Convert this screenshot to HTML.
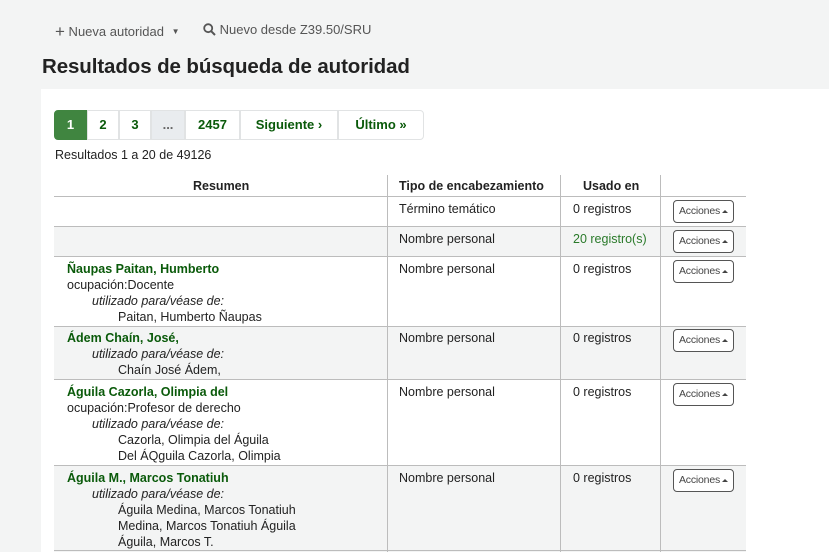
<!DOCTYPE html>
<html><head><meta charset="utf-8"><style>
*{margin:0;padding:0;box-sizing:border-box}
html,body{width:829px;height:552px;overflow:hidden}
body{background:#f3f4f4;font-family:"Liberation Sans",sans-serif;font-size:12.5px;color:#222;position:relative}
.a{position:absolute;white-space:nowrap}
.tb{color:#555;font-size:13px;top:21px}
h1{position:absolute;left:42px;top:55px;font-size:20.5px;font-weight:bold;letter-spacing:-0.1px;color:#222}
.panel{position:absolute;left:41px;top:89px;width:788px;height:463px;background:#fff}
.pg{position:absolute;top:110px;height:30px;border:1px solid #e1e3e4;background:#fff;color:#0a5a0a;font-weight:bold;font-size:13px;text-align:center;line-height:28px}
.hl{position:absolute;left:54px;width:692px;height:1px;background:#bcbcbc}
.vl{position:absolute;width:1px;background:#bcbcbc;top:175px;height:377px}
.grey{position:absolute;left:54px;width:692px;background:#f3f4f4}
.btn{position:absolute;left:673px;width:61px;height:23px;border:1px solid #555;border-radius:4px;font-size:10.5px;letter-spacing:-0.2px;color:#444;line-height:21px;padding-left:5px;background:#fff}
.btn:after{content:"";position:absolute;right:5px;top:9px;border-left:3px solid transparent;border-right:3px solid transparent;border-bottom:3px solid #444}
.g{color:#0a5a0a;font-weight:bold}
.i{font-style:italic}
.th{font-weight:bold;top:179px}
</style></head><body>
<div class="a tb" style="left:55px"><span style="font-size:17px;position:relative;top:1px">+</span> Nueva autoridad <span style="font-size:8px;position:relative;top:-2px;margin-left:4px">▼</span></div>
<div class="a tb" style="left:203px"><svg width="13" height="13" viewBox="0 0 13 13" style="position:relative;top:2px"><circle cx="5.2" cy="5.2" r="4" fill="none" stroke="#555" stroke-width="1.8"/><line x1="8.2" y1="8.2" x2="12" y2="12" stroke="#555" stroke-width="2"/></svg> Nuevo desde Z39.50/SRU</div>
<h1>Resultados de búsqueda de autoridad</h1>
<div class="panel"></div>
<div class="pg" style="left:54px;width:33px;background:#408540;border-color:#408540;color:#fff;border-radius:4px 0 0 4px">1</div>
<div class="pg" style="left:87px;width:32px">2</div>
<div class="pg" style="left:119px;width:32px">3</div>
<div class="pg" style="left:151px;width:34px;background:#e9ecef;color:#666">...</div>
<div class="pg" style="left:185px;width:55px">2457</div>
<div class="pg" style="left:240px;width:98px">Siguiente ›</div>
<div class="pg" style="left:338px;width:86px;border-radius:0 4px 4px 0">Último »</div>
<div class="a" style="left:55px;top:148px">Resultados 1 a 20 de 49126</div>

<div class="grey" style="top:227px;height:30px"></div>
<div class="grey" style="top:327px;height:53px"></div>
<div class="grey" style="top:466px;height:86px"></div>
<div class="hl" style="top:196px"></div>
<div class="hl" style="top:226px"></div>
<div class="hl" style="top:256px"></div>
<div class="hl" style="top:326px"></div>
<div class="hl" style="top:379px"></div>
<div class="hl" style="top:465px"></div>
<div class="hl" style="top:550px"></div>
<div class="vl" style="left:387px"></div>
<div class="vl" style="left:560px"></div>
<div class="vl" style="left:660px"></div>

<div class="a th" style="left:193px">Resumen</div>
<div class="a th" style="left:399px">Tipo de encabezamiento</div>
<div class="a th" style="left:583px">Usado en</div>

<div class="a" style="left:399px;top:202px">Término temático</div>
<div class="a" style="left:573px;top:202px">0 registros</div>
<div class="btn" style="top:200px">Acciones</div>

<div class="a" style="left:399px;top:232px">Nombre personal</div>
<div class="a" style="left:573px;top:232px;color:#2a7a2a">20 registro(s)</div>
<div class="btn" style="top:230px">Acciones</div>

<div class="a" style="left:67px;top:261px;line-height:16px"><span class="g">Ñaupas Paitan, Humberto</span><br>ocupación:Docente<br><span class="i" style="margin-left:25px">utilizado para/véase de:</span><br><span style="margin-left:51px">Paitan, Humberto Ñaupas</span></div>
<div class="a" style="left:399px;top:262px">Nombre personal</div>
<div class="a" style="left:573px;top:262px">0 registros</div>
<div class="btn" style="top:260px">Acciones</div>

<div class="a" style="left:67px;top:330px;line-height:16px"><span class="g">Ádem Chaín, José,</span><br><span class="i" style="margin-left:25px">utilizado para/véase de:</span><br><span style="margin-left:51px">Chaín José Ádem,</span></div>
<div class="a" style="left:399px;top:331px">Nombre personal</div>
<div class="a" style="left:573px;top:331px">0 registros</div>
<div class="btn" style="top:329px">Acciones</div>

<div class="a" style="left:67px;top:384px;line-height:16px"><span class="g">Águila Cazorla, Olimpia del</span><br>ocupación:Profesor de derecho<br><span class="i" style="margin-left:25px">utilizado para/véase de:</span><br><span style="margin-left:51px">Cazorla, Olimpia del Águila</span><br><span style="margin-left:51px">Del ÁQguila Cazorla, Olimpia</span></div>
<div class="a" style="left:399px;top:385px">Nombre personal</div>
<div class="a" style="left:573px;top:385px">0 registros</div>
<div class="btn" style="top:383px">Acciones</div>

<div class="a" style="left:67px;top:470px;line-height:16px"><span class="g">Águila M., Marcos Tonatiuh</span><br><span class="i" style="margin-left:25px">utilizado para/véase de:</span><br><span style="margin-left:51px">Águila Medina, Marcos Tonatiuh</span><br><span style="margin-left:51px">Medina, Marcos Tonatiuh Águila</span><br><span style="margin-left:51px">Águila, Marcos T.</span></div>
<div class="a" style="left:399px;top:471px">Nombre personal</div>
<div class="a" style="left:573px;top:471px">0 registros</div>
<div class="btn" style="top:469px">Acciones</div>
</body></html>
